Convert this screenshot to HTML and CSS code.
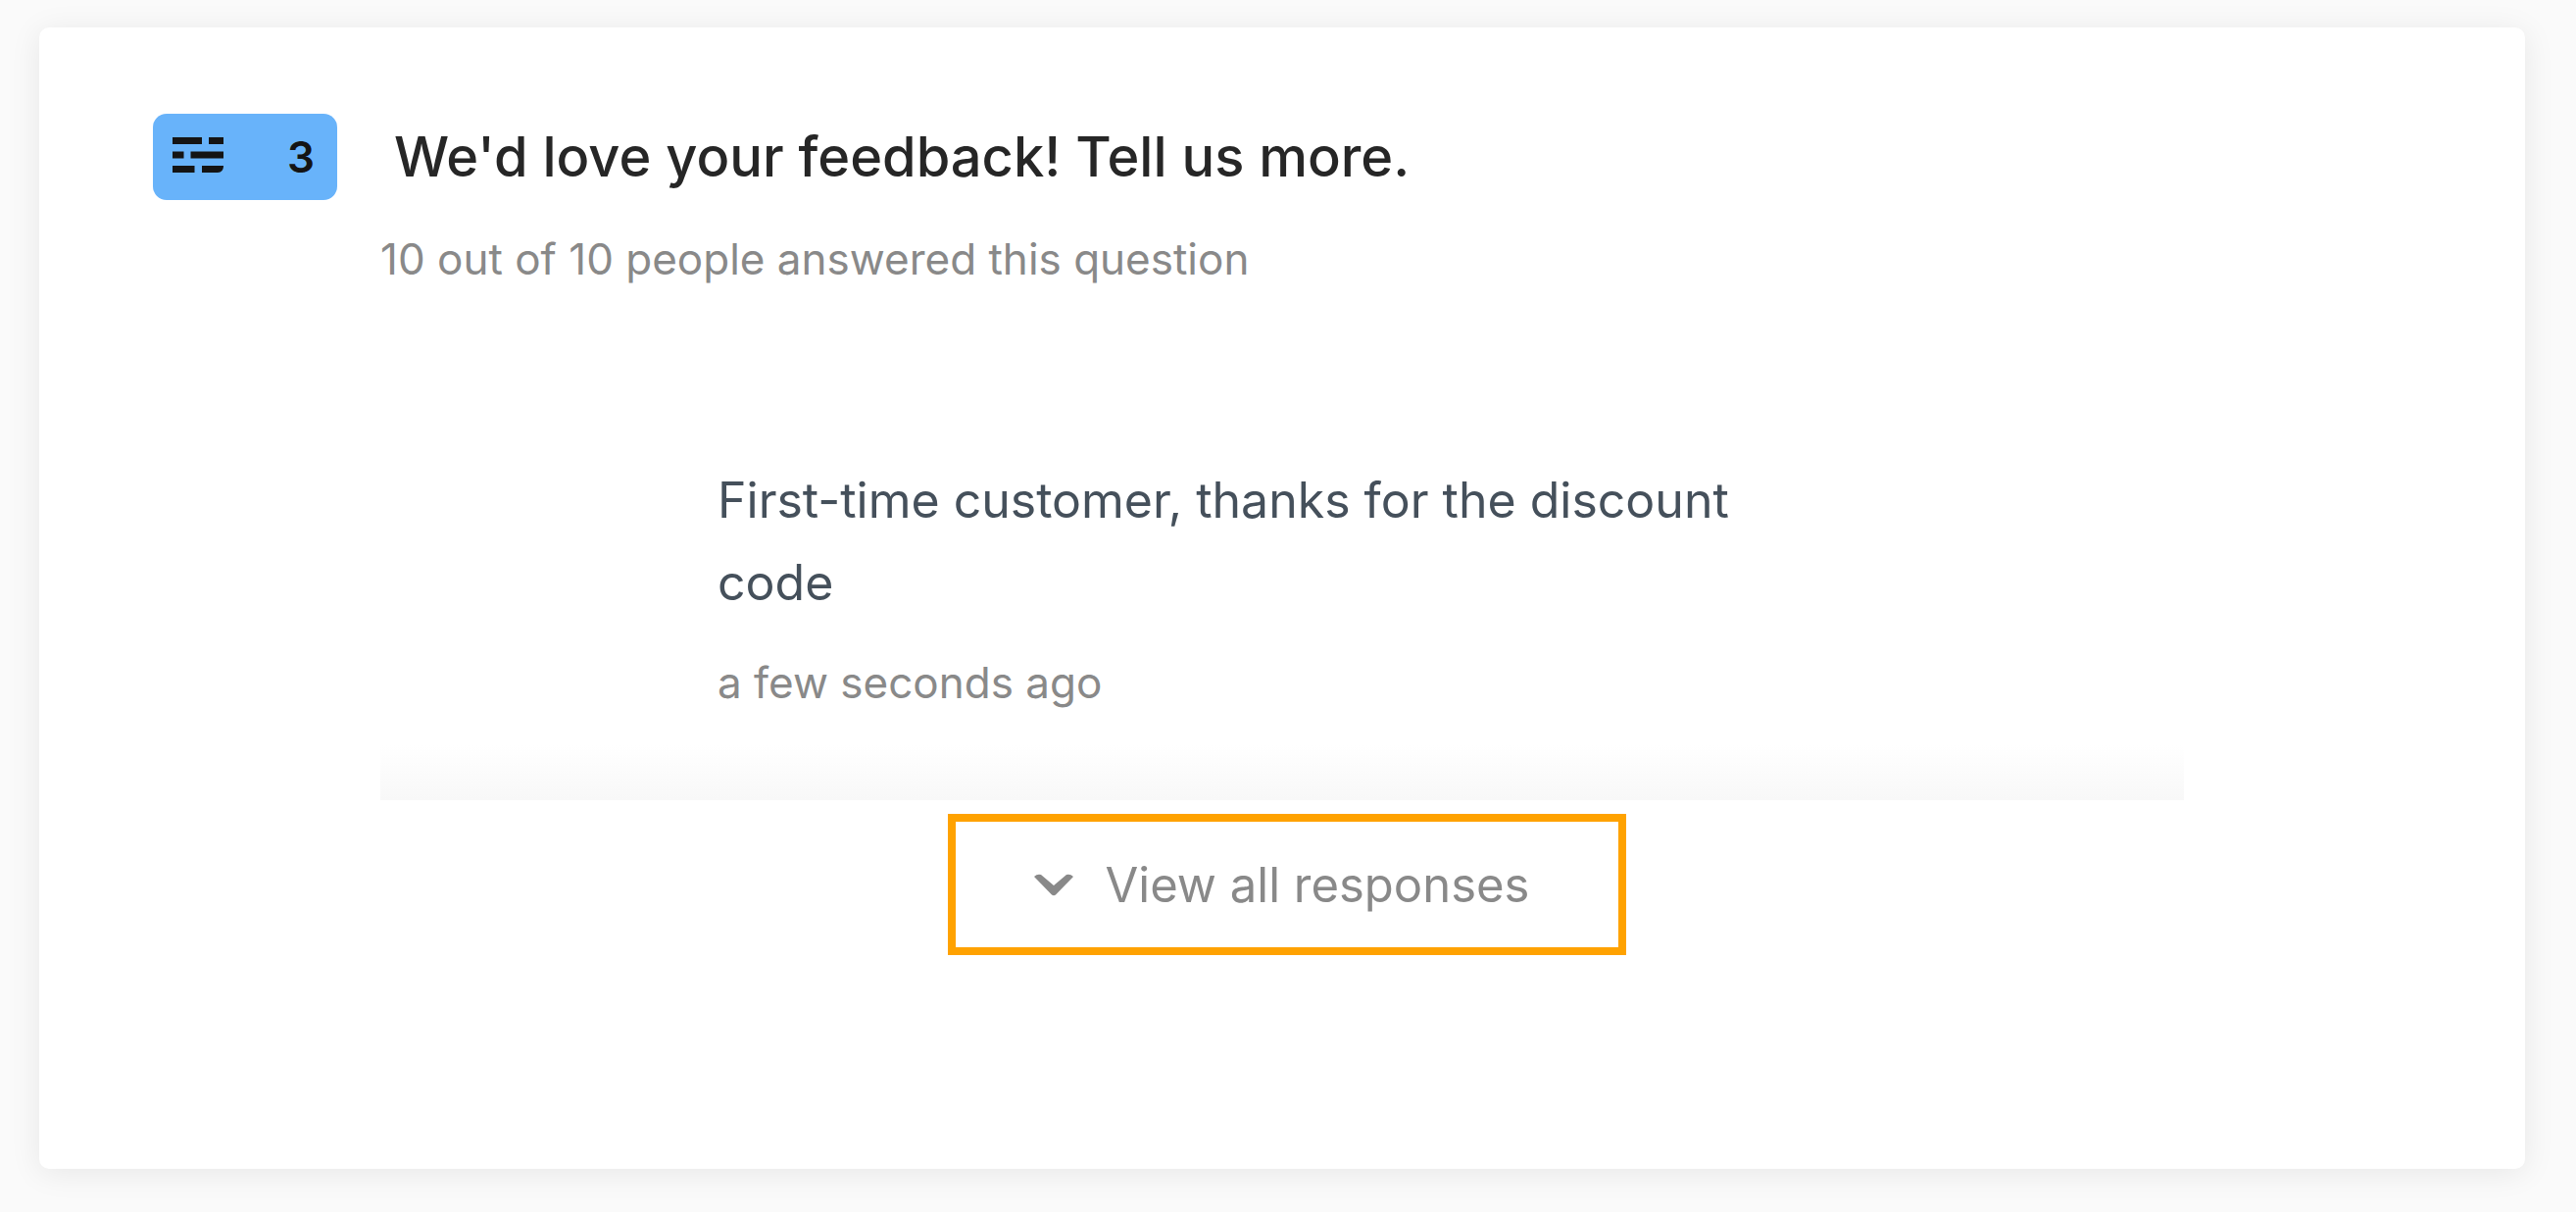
FILE: index.html
```
<!DOCTYPE html>
<html lang="en">
<head>
    <meta charset="UTF-8">
    <meta name="viewport" content="width=device-width, initial-scale=1.0">
    <title>Responses</title>
    <link rel="stylesheet" href="styles.css">
</head>
<body>
    <main class="card">
        <header class="question">
            <div class="badge">
                <svg class="badge-icon" viewBox="0 0 52 36" aria-hidden="true">
                    <path d="M0 0h30v7H0zM37 0h15v7H37zM0 14.500h11.500v7H0zM18.500 14.500H52v7H18.500zM0 29h22.500v7H0zM30 29h22c0 4-2 7-6 7H30z"/>
                </svg>
                <span class="badge-number">3</span>
            </div>
            <h1>We'd love your feedback! Tell us more.</h1>
        </header>

        <section class="content">
            <p class="muted">10 out of 10 people answered this question</p>
            <article class="response">
                <p class="response-text">First-time customer, thanks for the discount code</p>
                <p class="muted">a few seconds ago</p>
            </article>
            <div class="fade"></div>
            <div class="actions">
                <button type="button" class="view-all">
                    <svg class="chevron" viewBox="0 0 42 24" aria-hidden="true">
                        <path d="M1 4Q4 1 8 2L21 13 34 2Q38 1 41 4L23 22.500Q21 24 19 22.500z"/>
                    </svg>
                    View all responses
                </button>
            </div>
        </section>
    </main>
</body>
</html>
```
FILE: styles.css
```
*{margin:0; padding:0; box-sizing:border-box;}
body{font-family:Inter, "Liberation Sans", sans-serif; background:#fafafa; padding:28px 52px 44px 40px;}
.card{background:#fff; border-radius:10px; padding:88px 116px 218px; box-shadow:0 4px 32px rgba(0,0,0,.08);}
.question{display:flex; align-items:center; gap:58px;}
.badge{display:flex; align-items:center; justify-content:space-between; width:188px; height:88px; padding:0 23px 0 20px; border-radius:14px; background:#68b3fa; color:#141414;}
.badge-icon{width:52px; height:36px; margin-bottom:4px; fill:#141414;}
.badge-number{font-size:44px; font-weight:600;}
h1{font-size:56px; font-weight:500; line-height:64px; color:#262626;}
.content{padding:28px 232px 0;}
.muted{font-size:44px; line-height:64px; color:#898989;}
.response{width:1152px; margin:0 auto; padding:172px 0 32px;}
.response-text{font-size:50px; line-height:84px; color:#45505b; margin-bottom:28px;}
.fade{height:56px; background:linear-gradient(#fff, #f8f8f8);}
.actions{display:flex; justify-content:center; padding:14px 0 0 10px;}
.view-all{display:flex; align-items:center; gap:32px; height:144px; padding:0 91px 0 79px; border:8px solid #ffa200; background:transparent; font-family:inherit; font-size:49px; color:#898989; cursor:pointer;}
.chevron{width:42px; height:24px; fill:#898989;}
```
